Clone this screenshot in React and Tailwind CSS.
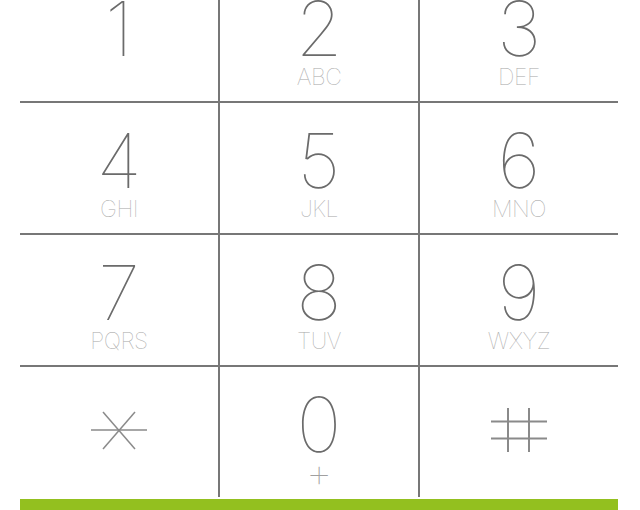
import React from 'react';

const rows = [
  [
    { digit: '1', letters: '' },
    { digit: '2', letters: 'ABC' },
    { digit: '3', letters: 'DEF' },
  ],
  [
    { digit: '4', letters: 'GHI' },
    { digit: '5', letters: 'JKL' },
    { digit: '6', letters: 'MNO' },
  ],
  [
    { digit: '7', letters: 'PQRS' },
    { digit: '8', letters: 'TUV' },
    { digit: '9', letters: 'WXYZ' },
  ],
];

const font = { fontFamily: '"Helvetica Neue", Inter, "Liberation Sans", sans-serif' };

const StarIcon = () => (
  <svg width="58" height="39" viewBox="0 0 58 39" fill="none" stroke="#8a8a8a" strokeWidth="1.5">
    <line x1="1" y1="19" x2="57" y2="19" />
    <line x1="13" y1="1" x2="45" y2="38" />
    <line x1="45" y1="1" x2="13" y2="38" />
  </svg>
);

const HashIcon = () => (
  <svg width="58" height="46" viewBox="0 0 58 46" fill="none" stroke="#8a8a8a" strokeWidth="2">
    <line x1="18" y1="1" x2="18" y2="45" />
    <line x1="39" y1="1" x2="39" y2="45" />
    <line x1="1" y1="14.5" x2="57" y2="14.5" />
    <line x1="1" y1="31.5" x2="57" y2="31.5" />
  </svg>
);

const Key = ({ digit, letters, last }) => (
  <button
    className={`h-[130px] flex flex-col items-center pt-[19px] ${
      last ? 'w-[198px]' : 'w-[200px] border-r-2 border-[#777777]'
    }`}
  >
    <span className="text-[76px] leading-none font-thin text-[#6b6b6b]">{digit}</span>
    {letters && (
      <span className="text-[23px] leading-none font-thin text-[#a8a8a8] tracking-[-0.5px]">{letters}</span>
    )}
  </button>
);

export default function App() {
  return (
    <div className="w-[640px] h-[510px] bg-white overflow-hidden antialiased" style={font}>
      <div className="ml-[20px] w-[598px] mt-[-29px]">
        {rows.map((row, i) => (
          <div key={i} className="flex border-b-2 border-[#777777]">
            {row.map((k, j) => (
              <Key key={k.digit} {...k} last={j === 2} />
            ))}
          </div>
        ))}

        {/* bottom row */}
        <div className="flex">
          <button className="w-[200px] h-[130px] border-r-2 border-[#777777] flex justify-center pt-[44px]">
            <StarIcon />
          </button>
          <button className="w-[200px] h-[130px] border-r-2 border-[#777777] flex flex-col items-center pt-[19px]">
            <span className="text-[76px] leading-none font-thin text-[#6b6b6b]">0</span>
            <span className="text-[42px] leading-none font-thin text-[#a0a0a0] mt-[-11px]">+</span>
          </button>
          <button className="w-[198px] h-[130px] flex justify-center pt-[40px]">
            <HashIcon />
          </button>
        </div>

        <div className="mt-[2px] h-[16px] bg-[#93c01f]" />
      </div>
    </div>
  );
}
